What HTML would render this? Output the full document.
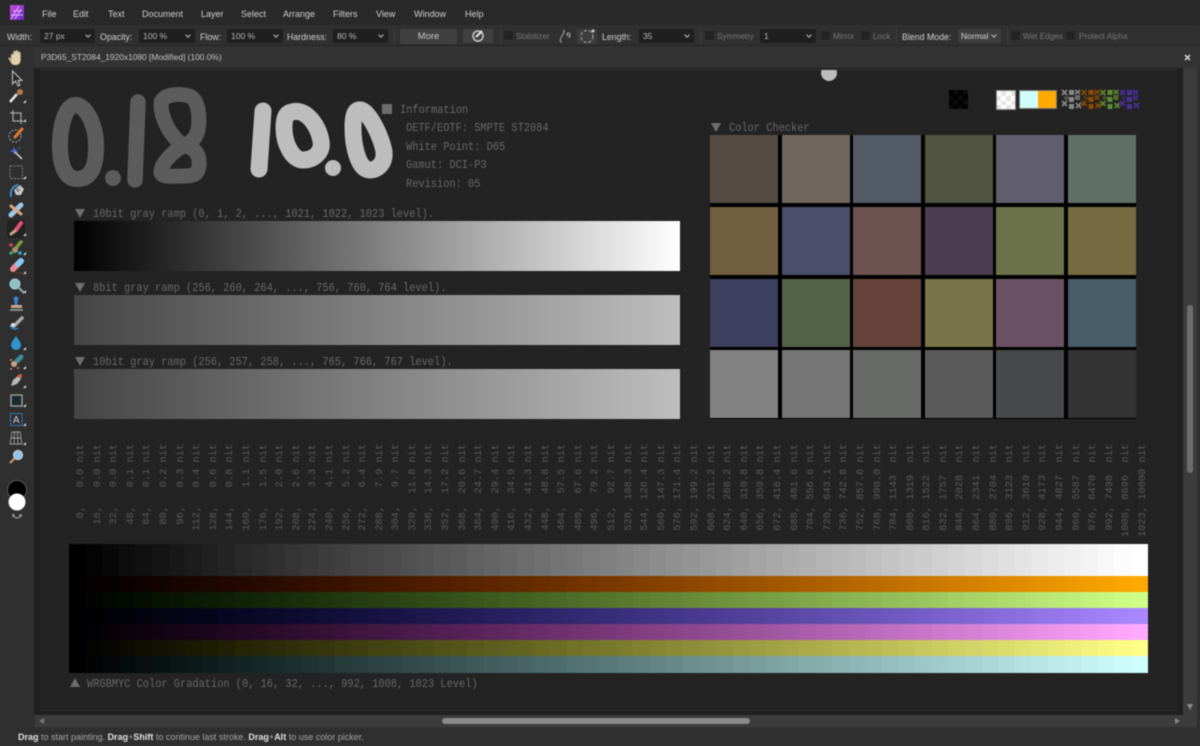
<!DOCTYPE html>
<html lang="en"><head><meta charset="utf-8"><title>Affinity Photo</title>
<style>
html,body{margin:0;padding:0;background:#303030}
body{width:1200px;height:746px;overflow:hidden;position:relative;font-family:"Liberation Sans",sans-serif;font-size:9px;color:#c8c8c8;filter:blur(.4px)}
.r,.a{position:absolute}
.a{white-space:nowrap;line-height:12px}
.m{top:8px;font-size:9px;color:#d0d0d0}
.t{top:30.5px;color:#cfcfcf;font-size:8.8px}
.d{color:#777}
.bx{position:absolute;top:29px;height:14px;background:#1f1f1f;border-radius:2px;color:#b8b8b8;font-size:8.5px;line-height:15px;text-indent:4px}
.bx:after{content:"";position:absolute;right:5px;top:4px;width:3px;height:3px;border-right:1px solid #bbb;border-bottom:1px solid #bbb;transform:rotate(45deg)}
.c{position:absolute;top:31px;width:9px;height:9px;background:#232323;border-radius:1px}
.s{position:absolute;top:28px;width:1px;height:16px;background:#3f3f3f}
.mo{font-family:"Liberation Mono",monospace;font-size:12px;color:#686868;transform:scaleX(.861);transform-origin:0 50%;white-space:pre;line-height:14px}
.tri{position:absolute;width:0;height:0;border-left:5.5px solid transparent;border-right:5.5px solid transparent;border-top:9px solid #6e6e6e}
#n{position:absolute;left:73px;top:443px;display:flex;width:1079px}
#n p{margin:0;width:16.6px;height:94px;line-height:16.6px;writing-mode:vertical-rl;transform:rotate(180deg);white-space:pre;font-family:"Liberation Mono",monospace;font-size:10.35px;color:#5a5a5a}
#g{position:absolute;left:69px;top:544px;width:1079px;height:128.5px;display:flex;isolation:isolate}
#g i{flex:1;display:block}
#g b{position:absolute;left:0;right:0;height:16px;mix-blend-mode:multiply}
.cc{position:absolute;width:68px;height:68px}
</style></head><body>

<!-- panels -->
<div class="r" style="left:0;top:0;width:1200px;height:25px;background:#292929"></div>
<div class="r" style="left:0;top:25px;width:1200px;height:21px;background:#303030;border-bottom:1px solid #262626;box-sizing:border-box"></div>
<div class="r" style="left:0;top:46px;width:34px;height:681px;background:#2f2f2f"></div>
<div class="r" style="left:34px;top:46px;width:1166px;height:22px;background:#333"></div>
<div class="r" style="left:34px;top:68px;width:1149px;height:647px;background:#1f1f1f"></div>
<div class="r" style="left:40px;top:69px;width:1137px;height:642px;background:#232323;border-top:1px solid #333;border-bottom:1px solid #2e2e2e;box-sizing:border-box"></div>
<div class="r" style="left:1183px;top:68px;width:14px;height:659px;background:#3c3c3c"></div>
<div class="r" style="left:1197px;top:68px;width:3px;height:659px;background:#303030"></div>
<div class="r" style="left:1187px;top:305px;width:6px;height:168px;background:#6e6e6e;border-radius:3px"></div>
<div class="r" style="left:35px;top:715px;width:1148px;height:12px;background:#3c3c3c"></div>
<div class="r" style="left:442px;top:718px;width:308px;height:6px;background:#8a8a8a;border-radius:3px"></div>
<div class="r" style="left:0;top:727px;width:1200px;height:19px;background:#2f2f2f"></div>

<!-- menu -->
<span class="a m" style="left:42px">File</span><span class="a m" style="left:73px">Edit</span><span class="a m" style="left:108px">Text</span><span class="a m" style="left:142px">Document</span><span class="a m" style="left:201px">Layer</span><span class="a m" style="left:241px">Select</span><span class="a m" style="left:283px">Arrange</span><span class="a m" style="left:333px">Filters</span><span class="a m" style="left:376px">View</span><span class="a m" style="left:414px">Window</span><span class="a m" style="left:465px">Help</span>

<!-- toolbar -->
<span class="a t" style="left:7px">Width:</span><div class="bx" style="left:40px;width:55px">27 px</div>
<span class="a t" style="left:100px">Opacity:</span><div class="bx" style="left:139px;width:56px">100 %</div>
<span class="a t" style="left:200px">Flow:</span><div class="bx" style="left:227px;width:56px">100 %</div>
<span class="a t" style="left:287px">Hardness:</span><div class="bx" style="left:333px;width:55px">80 %</div>
<div class="s" style="left:394px"></div>
<div class="r" style="left:400px;top:29px;width:57px;height:15px;background:#404040;border-radius:1px;text-align:center;line-height:15px;font-size:9.5px;color:#c8c8c8">More</div>
<div class="r" style="left:463px;top:29px;width:30px;height:14px;background:#404040;border-radius:1px"></div>
<div class="s" style="left:500px"></div>
<div class="c" style="left:504px"></div><span class="a t d" style="left:516px;font-size:8.2px">Stabilizer</span>
<div class="r" style="left:577px;top:29px;width:20px;height:15px;background:#3c3c3c;border-radius:1px"></div>
<span class="a t" style="left:602px">Length:</span><div class="bx" style="left:639px;width:55px">35</div>
<div class="s" style="left:700px"></div>
<div class="c" style="left:705px"></div><span class="a t d" style="left:717px;font-size:8.2px">Symmetry</span>
<div class="bx" style="left:760px;width:56px">1</div>
<div class="c" style="left:821px"></div><span class="a t d" style="left:833px;font-size:8.2px">Mirror</span>
<div class="c" style="left:861px"></div><span class="a t d" style="left:873px;font-size:8.2px">Lock</span>
<div class="s" style="left:896px"></div>
<span class="a t" style="left:902px;font-size:8.8px">Blend Mode:</span><div class="bx" style="left:958px;width:43px;background:#3e3e3e;color:#d0d0d0;text-indent:3px">Normal</div>
<div class="s" style="left:1007px"></div>
<div class="c" style="left:1011px"></div><span class="a t d" style="left:1023px;font-size:8.2px">Wet Edges</span>
<div class="c" style="left:1066px"></div><span class="a t d" style="left:1079px;font-size:8.2px">Protect Alpha</span>

<span class="a" style="left:41px;top:51px;font-size:8.4px;color:#c4c4c4">P3D65_ST2084_1920x1080 [Modified] (100.0%)</span>

<!-- canvas texts -->
<span class="a mo" style="left:400px;top:102.5px">Information</span>
<span class="a mo" style="left:406px;top:120.500px">OETF/EOTF: SMPTE ST2084</span>
<span class="a mo" style="left:406px;top:139.5px">White Point: D65</span>
<span class="a mo" style="left:406px;top:157.5px">Gamut: DCI-P3</span>
<span class="a mo" style="left:406px;top:176.5px">Revision: 05</span>
<div class="r" style="left:382px;top:104px;width:10px;height:10px;background:#6e6e6e"></div>

<div class="tri" style="left:75px;top:209px"></div>
<span class="a mo" style="left:93px;top:207px">10bit gray ramp (0, 1, 2, ..., 1021, 1022, 1023 level).</span>
<div class="r" style="left:74px;top:221px;width:606px;height:50px;background:linear-gradient(90deg,#000,#fff)"></div>
<div class="tri" style="left:75px;top:283px"></div>
<span class="a mo" style="left:93px;top:281px">8bit gray ramp (256, 260, 264, ..., 756, 760, 764 level).</span>
<div class="r" style="left:74px;top:295px;width:606px;height:50px;background:linear-gradient(90deg,#454545,#bebebe)"></div>
<div class="tri" style="left:75px;top:357px"></div>
<span class="a mo" style="left:93px;top:354.5px">10bit gray ramp (256, 257, 258, ..., 765, 766, 767 level).</span>
<div class="r" style="left:74px;top:369px;width:606px;height:50px;background:linear-gradient(90deg,#454545,#bebebe)"></div>

<div class="tri" style="left:711px;top:123px"></div>
<span class="a mo" style="left:729px;top:121px">Color Checker</span>

<!-- color checker -->
<div class="r" style="left:710px;top:135px;width:426px;height:284px;background:#000"></div>
<div class="cc" style="left:710px;top:135.3px;background:#544b45"></div><div class="cc" style="left:781.7px;top:135.3px;background:#6f665f"></div><div class="cc" style="left:853.3px;top:135.3px;background:#525a66"></div><div class="cc" style="left:925px;top:135.3px;background:#50543f"></div><div class="cc" style="left:996.3px;top:135.3px;background:#605e6d"></div><div class="cc" style="left:1068px;top:135.3px;background:#606f68"></div>
<div class="cc" style="left:710px;top:207px;background:#715f3f"></div><div class="cc" style="left:781.7px;top:207px;background:#4a4e6a"></div><div class="cc" style="left:853.3px;top:207px;background:#6d5050"></div><div class="cc" style="left:925px;top:207px;background:#4b3d50"></div><div class="cc" style="left:996.3px;top:207px;background:#6b7149"></div><div class="cc" style="left:1068px;top:207px;background:#776a41"></div>
<div class="cc" style="left:710px;top:278.7px;background:#3d3f5f"></div><div class="cc" style="left:781.7px;top:278.7px;background:#536347"></div><div class="cc" style="left:853.3px;top:278.7px;background:#644239"></div><div class="cc" style="left:925px;top:278.7px;background:#787449"></div><div class="cc" style="left:996.3px;top:278.7px;background:#6c5064"></div><div class="cc" style="left:1068px;top:278.7px;background:#475c69"></div>
<div class="cc" style="left:710px;top:350.3px;background:#828282"></div><div class="cc" style="left:781.7px;top:350.3px;background:#757575"></div><div class="cc" style="left:853.3px;top:350.3px;background:#686a68"></div><div class="cc" style="left:925px;top:350.3px;background:#5a5a5a"></div><div class="cc" style="left:996.3px;top:350.3px;background:#47484a"></div><div class="cc" style="left:1068px;top:350.3px;background:#333"></div>

<!-- vertical labels -->
<div id="n"><p>   0,   0.0 nit</p><p>  16,   0.0 nit</p><p>  32,   0.0 nit</p><p>  48,   0.1 nit</p><p>  64,   0.1 nit</p><p>  80,   0.2 nit</p><p>  96,   0.3 nit</p><p> 112,   0.4 nit</p><p> 128,   0.6 nit</p><p> 144,   0.8 nit</p><p> 160,   1.1 nit</p><p> 176,   1.5 nit</p><p> 192,   2.0 nit</p><p> 208,   2.6 nit</p><p> 224,   3.3 nit</p><p> 240,   4.1 nit</p><p> 256,   5.2 nit</p><p> 272,   6.4 nit</p><p> 288,   7.9 nit</p><p> 304,   9.7 nit</p><p> 320,  11.8 nit</p><p> 336,  14.3 nit</p><p> 352,  17.2 nit</p><p> 368,  20.6 nit</p><p> 384,  24.7 nit</p><p> 400,  29.4 nit</p><p> 416,  34.9 nit</p><p> 432,  41.3 nit</p><p> 448,  48.8 nit</p><p> 464,  57.5 nit</p><p> 480,  67.6 nit</p><p> 496,  79.2 nit</p><p> 512,  92.7 nit</p><p> 528, 108.3 nit</p><p> 544, 126.4 nit</p><p> 560, 147.3 nit</p><p> 576, 171.4 nit</p><p> 592, 199.2 nit</p><p> 608, 231.2 nit</p><p> 624, 268.2 nit</p><p> 640, 310.8 nit</p><p> 656, 359.8 nit</p><p> 672, 416.4 nit</p><p> 688, 481.6 nit</p><p> 704, 556.6 nit</p><p> 720, 643.1 nit</p><p> 736, 742.8 nit</p><p> 752, 857.6 nit</p><p> 768, 990.0 nit</p><p> 784, 1143  nit</p><p> 800, 1319  nit</p><p> 816, 1522  nit</p><p> 832, 1757  nit</p><p> 848, 2028  nit</p><p> 864, 2341  nit</p><p> 880, 2704  nit</p><p> 896, 3123  nit</p><p> 912, 3610  nit</p><p> 928, 4173  nit</p><p> 944, 4827  nit</p><p> 960, 5587  nit</p><p> 976, 6470  nit</p><p> 992, 7498  nit</p><p>1008, 8696  nit</p><p>1023, 10000 nit</p></div>

<!-- stepped gradation -->
<div id="g">
<i style="background:#000"></i><i style="background:#040404"></i><i style="background:#080808"></i><i style="background:#0c0c0c"></i><i style="background:#101010"></i><i style="background:#141414"></i><i style="background:#181818"></i><i style="background:#1c1c1c"></i><i style="background:#202020"></i><i style="background:#242424"></i><i style="background:#282828"></i><i style="background:#2c2c2c"></i><i style="background:#303030"></i><i style="background:#343434"></i><i style="background:#383838"></i><i style="background:#3c3c3c"></i><i style="background:#404040"></i><i style="background:#444"></i><i style="background:#484848"></i><i style="background:#4c4c4c"></i><i style="background:#505050"></i><i style="background:#545454"></i><i style="background:#585858"></i><i style="background:#5c5c5c"></i><i style="background:#606060"></i><i style="background:#646464"></i><i style="background:#686868"></i><i style="background:#6c6c6c"></i><i style="background:#707070"></i><i style="background:#747474"></i><i style="background:#787878"></i><i style="background:#7c7c7c"></i><i style="background:#808080"></i><i style="background:#848484"></i><i style="background:#888"></i><i style="background:#8c8c8c"></i><i style="background:#909090"></i><i style="background:#949494"></i><i style="background:#989898"></i><i style="background:#9c9c9c"></i><i style="background:#a0a0a0"></i><i style="background:#a4a4a4"></i><i style="background:#a8a8a8"></i><i style="background:#acacac"></i><i style="background:#b0b0b0"></i><i style="background:#b4b4b4"></i><i style="background:#b8b8b8"></i><i style="background:#bcbcbc"></i><i style="background:#c0c0c0"></i><i style="background:#c4c4c4"></i><i style="background:#c8c8c8"></i><i style="background:#ccc"></i><i style="background:#d0d0d0"></i><i style="background:#d4d4d4"></i><i style="background:#d8d8d8"></i><i style="background:#dcdcdc"></i><i style="background:#e0e0e0"></i><i style="background:#e4e4e4"></i><i style="background:#e8e8e8"></i><i style="background:#ececec"></i><i style="background:#f0f0f0"></i><i style="background:#f4f4f4"></i><i style="background:#f8f8f8"></i><i style="background:#fcfcfc"></i><i style="background:#fff"></i>
<b style="top:32px;background:linear-gradient(90deg,#d81400,#e85000 28%,#f47e00 60%,#ffaa00)"></b>
<b style="top:48px;background:linear-gradient(90deg,#40d810,#8ae040 28%,#b4f064 60%,#d0ff88)"></b>
<b style="top:64px;background:linear-gradient(90deg,#1410d8,#5040e8 28%,#7e64f4 60%,#aa88ff)"></b>
<b style="top:80px;background:linear-gradient(90deg,#d814d8,#e850e8 28%,#f47ef4 60%,#ffaaff)"></b>
<b style="top:96px;background:linear-gradient(90deg,#d8d810,#e8e840 28%,#f4f464 60%,#ffff88)"></b>
<b style="top:112px;height:16.5px;background:linear-gradient(90deg,#40d8d8,#9ce8e8 28%,#bcf4f4 60%,#d0ffff)"></b>
</div>

<div class="tri" style="left:70px;top:678px;border-top:none;border-bottom:9px solid #6e6e6e"></div>
<span class="a mo" style="left:87px;top:676.5px">WRGBMYC Color Gradation (0, 16, 32, ..., 992, 1008, 1023 Level)</span>

<!-- status -->
<span class="a" style="left:18px;top:731px;font-size:9px;color:#a4a4a4"><b style="color:#e0e0e0">Drag</b> to start painting. <b style="color:#e0e0e0">Drag</b>+<b style="color:#e0e0e0">Shift</b> to continue last stroke. <b style="color:#e0e0e0">Drag</b>+<b style="color:#e0e0e0">Alt</b> to use color picker.</span>

<!-- drawn overlay -->
<svg class="r" style="left:0;top:0" width="1200" height="746" viewBox="0 0 1200 746" fill="none">
<defs>
<linearGradient id="lg" x1="0" y1="0" x2="1" y2="1"><stop offset="0" stop-color="#c24ad8"/><stop offset="1" stop-color="#6a2bc8"/></linearGradient>
<g id="chk" fill="currentColor"><rect x="7" y="0" width="5" height="5"/><rect x="13" y="5" width="5" height="5" opacity=".75"/><rect x="7" y="7" width="5" height="5"/><rect x="2" y="6" width="5" height="4" opacity=".4"/><rect x="7" y="14" width="5" height="5"/><path d="M0 0l5 5M5 0l-5 5M0 11l5 5M5 11l-5 5M14 13l5 5M19 13l-5 5M13 0l5 4M18 0l-5 4" stroke="currentColor" stroke-width="1.6"/></g>
</defs>

<!-- logo -->
<rect x="10" y="5" width="14" height="15" fill="url(#lg)"/>
<path d="M11 19L19 6M15 19L21 9M11 15H23M13 11H22" stroke="#efc6ff" stroke-width="1" opacity=".85"/>

<!-- handwriting -->
<g stroke="#5c5c5c" stroke-linecap="round" stroke-linejoin="round">
<path stroke-width="16" d="M76,105 C88,106 97,130 96,148 C96,168 90,179 77,179 C65,179 60,165 60,145 C60,125 66,104 76,105Z"/>
<path stroke-width="15.500" d="M138,102L135,180"/>
<path stroke-width="15" d="M161,104 C161,94 180,93 189,96 C199,99 200,118 198,130 C196,140 188,144 183,146 C172,152 161,164 161,172 C161,178 175,176 183,176 C195,176 200,174 199,160 C198,150 190,147 183,145 C172,138 161,120 161,104Z"/>
</g>
<circle cx="113" cy="178" r="8" fill="#5c5c5c"/>
<g stroke="#bdbdbd" stroke-width="17" stroke-linecap="round" stroke-linejoin="round">
<path d="M263,111L259,169"/>
<path d="M292,112 C305,108 318,124 321,141 C323,153 313,160 303,160 C292,160 284,143 284,128 C284,118 286,113 292,112Z"/>
<path d="M359,110 C368,108 382,138 384,152 C385,165 376,170 370,170 C358,170 353,145 353,128 C353,118 354,111 359,110Z"/>
</g>
<circle cx="333" cy="168" r="8" fill="#bdbdbd"/>

<!-- top knob -->
<clipPath id="kc"><rect x="810" y="70" width="40" height="20"/></clipPath>
<circle cx="829" cy="73" r="8" fill="#bbb" clip-path="url(#kc)"/>

<!-- swatches -->
<rect x="949" y="90" width="19" height="19" fill="#000"/>
<path d="M953 90h5v5h-5zM963 90h5v5h-5zM949 95h4v5h-4zM958 95h5v5h-5zM953 100h5v5h-5zM963 100h5v5h-5zM949 105h4v4h-4zM958 105h5v4h-5z" fill="#0b0b0b"/>
<rect x="996.5" y="90.5" width="19" height="19" fill="#fff" stroke="#888"/>
<path d="M1001 91h5v5h-5zM1011 91h4v5h-4zM997 96h4v5h-4zM1006 96h5v5h-5zM1001 101h5v4h-5zM1011 101h4v4h-4zM997 105h4v4h-4zM1006 105h5v4h-5z" fill="#e6e6e6"/>
<rect x="1019" y="90" width="19" height="19" fill="#d0ffff"/>
<rect x="1038" y="90" width="19" height="19" fill="#ffaa00"/>
<rect x="1019.5" y="90.5" width="37" height="18" stroke="#777"/>
<use href="#chk" x="1062" y="90" color="#8a8a8a"/>
<use href="#chk" x="1081.500" y="90" color="#8a4c00"/>
<use href="#chk" x="1100.500" y="90" color="#5e8a30"/>
<use href="#chk" x="1120" y="90" color="#4b2f99"/>

<!-- toolbar icons -->
<g transform="translate(478 36)"><circle r="5" stroke="#c8c8c8" stroke-width="1.5"/><path d="M-2 1L4-5" stroke="#e8e8e8" stroke-width="2"/></g>
<path d="M562 42c-3 0-2-3 0-6s3-6 1-6M568 33c2 0 3 2 1 5M568 33c-2 1-1 3 1 3" stroke="#aaa"/>
<circle cx="587" cy="36.500" r="6" stroke="#aaa" stroke-dasharray="3 2"/><circle cx="593" cy="31" r="1.500" fill="#ccc"/>

<!-- close / arrows -->
<path d="M1185 55l5 5M1190 55l-5 5" stroke="#ddd" stroke-width="1.500"/>
<path d="M1187 704h6l-3 6z" fill="#8a8a8a"/>
<path d="M1175 718v6l5-3z" fill="#8a8a8a"/>
<path d="M44 718v6l-5-3z" fill="#777"/>

<!-- tools -->
<path d="M11 61V55a1.200 1.200 0 012.400 0V52a1.200 1.200 0 012.400 0V51.500a1.200 1.200 0 012.400 0V53a1.200 1.200 0 012.400 0V60c0 3-2 5-4 5h-2c-2 0-3-1-4-3l-2-3c-.5-1 1-2 2-1z" fill="#e2d0b0" stroke="#8c7a60" stroke-width=".5"/>
<path d="M12.500 71V84L15.500 81 18 86 20 85 18 80.500H22z" fill="#2a2a2a" stroke="#c8c8c8"/>
<path d="M10 102L17 94" stroke="#e6e6e6" stroke-width="2.500"/><circle cx="20" cy="92" r="3" fill="#b97a4a"/>
<path d="M13 110V121H23M10 113H21V124" stroke="#a8a8a8" stroke-width="1.200"/>
<circle cx="15" cy="136" r="6" stroke="#a8a8a8" stroke-dasharray="2 1.500"/><path d="M15 137L22 129" stroke="#e07a30" stroke-width="3" stroke-linecap="round"/>
<path d="M14 147l1.500 3 3 .5-3 1.500-1 3-1.500-3-3-.5 3-1.500z" fill="#4a6adf"/><path d="M15 152L22 159" stroke="#ddd" stroke-width="1.500"/><path d="M18 148h4" stroke="#5a7ae0" stroke-dasharray="1 1"/>
<rect x="10" y="166" width="12.500" height="12.500" stroke="#888" stroke-dasharray="2 1.500"/>
<path d="M11 197C10 190 13 186 18 185" stroke="#3f8fd0" stroke-width="2"/><path d="M14 190l6-5 4 4-3 6h-5z" fill="#c8c8c8"/><circle cx="18" cy="190" r="2" fill="#888"/>
<path d="M11 215L21 205" stroke="#9cc8e8" stroke-width="5" stroke-linecap="round"/><path d="M11 206L21 214" stroke="#e0a878" stroke-width="3" stroke-linecap="round"/>
<rect x="7" y="220" width="18" height="18" rx="3" fill="#222"/>
<path d="M16 230L21 223" stroke="#e8506c" stroke-width="4" stroke-linecap="round"/><path d="M15 231L11 234" stroke="#c8a088" stroke-width="3" stroke-linecap="round"/>
<path d="M16 248L21 242" stroke="#7a9a3c" stroke-width="3.500" stroke-linecap="round"/><circle cx="15" cy="250" r="3" fill="#a89070"/><circle cx="11" cy="245" r="1.800" fill="#e04050"/><circle cx="11" cy="253" r="1.800" fill="#30b070"/><circle cx="20" cy="253" r="1.800" fill="#20b0e0"/>
<path d="M13 269L18 264" stroke="#e88a9a" stroke-width="6" stroke-linecap="round"/><path d="M18 264L21 261" stroke="#8cc8f0" stroke-width="6" stroke-linecap="round"/><path d="M16 273h6" stroke="#c05060" stroke-dasharray="1 1.500"/>
<circle cx="15" cy="284" r="5" fill="#8fc0c4" stroke="#a8d0d4"/><path d="M19 288L24 293" stroke="#9ab" stroke-width="2"/>
<rect x="14.500" y="298" width="3" height="7" fill="#3a80d0"/><circle cx="16" cy="299" r="2.500" fill="#3a80d0"/><rect x="11" y="305" width="11" height="3" fill="#c8a888"/><rect x="10" y="309" width="13" height="2" fill="#888"/>
<path d="M14 326L22 318" stroke="#aaa" stroke-width="3.500" stroke-linecap="round"/><path d="M10 325a5 5 0 008 3" stroke="#2a7fd0" stroke-width="1.500"/><circle cx="13" cy="325" r="2" fill="#e6e6e6"/>
<path d="M16 336c3 4 5 7 5 9a5 5 0 01-10 0c0-2 2-5 5-9z" fill="#2f94d0"/>
<path d="M17 361L21 357" stroke="#3c8a9a" stroke-width="5" stroke-linecap="round"/><circle cx="14" cy="364" r="3" fill="#c8a088"/><path d="M10 360h2M10 369h2M17 368h2" stroke="#c8906a" stroke-width="1.500"/>
<path d="M11 386l2-6 5-4 3 3-4 5z" fill="#bbb" stroke="#777" stroke-width=".5"/><circle cx="20" cy="376" r="2" fill="#e05a3a"/>
<rect x="11" y="395" width="11" height="11" fill="#1f2a2f" stroke="#a0a8a8" stroke-width="1.300"/>
<rect x="10.500" y="413.500" width="11.500" height="12" stroke="#2f78b0"/>
<text x="16.200" y="423" text-anchor="middle" font-family="Liberation Sans,sans-serif" font-size="10" fill="#cfcfcf">A</text>
<path d="M12 432H20L22 444H10zM10.700 438H21.300M14.500 432L14 444M17.500 432L18 444" stroke="#a0a0a0" stroke-width=".9"/>
<circle cx="18" cy="455" r="4.500" fill="#8cc4f0" stroke="#ccc" stroke-width="1.300"/><path d="M14.500 458.500L10 463" stroke="#c8a070" stroke-width="2"/>
<path d="M26 103v-3l-3 3zM26 122v-3l-3 3zM26 179v-3l-3 3zM26 236v-3l-3 3zM26 274v-3l-3 3zM26 293v-3l-3 3zM26 350v-3l-3 3zM26 369v-3l-3 3zM26 388v-3l-3 3zM26 407v-3l-3 3zM26 426v-3l-3 3zM26 445v-3l-3 3zM26 255v-3l-3 3z" fill="#ddd"/>

<!-- colour wells -->
<circle cx="17" cy="490" r="9.500" fill="#000" stroke="#555"/>
<circle cx="17" cy="502" r="8.500" fill="#fff"/>
<path d="M13 515c1 2 2 3 4 3s3-1 4-3" stroke="#aaa"/><path d="M12 517l1-3 2 2M22 517l-1-3-2 2" stroke="#aaa" stroke-width=".7"/>
</svg>
</body></html>
